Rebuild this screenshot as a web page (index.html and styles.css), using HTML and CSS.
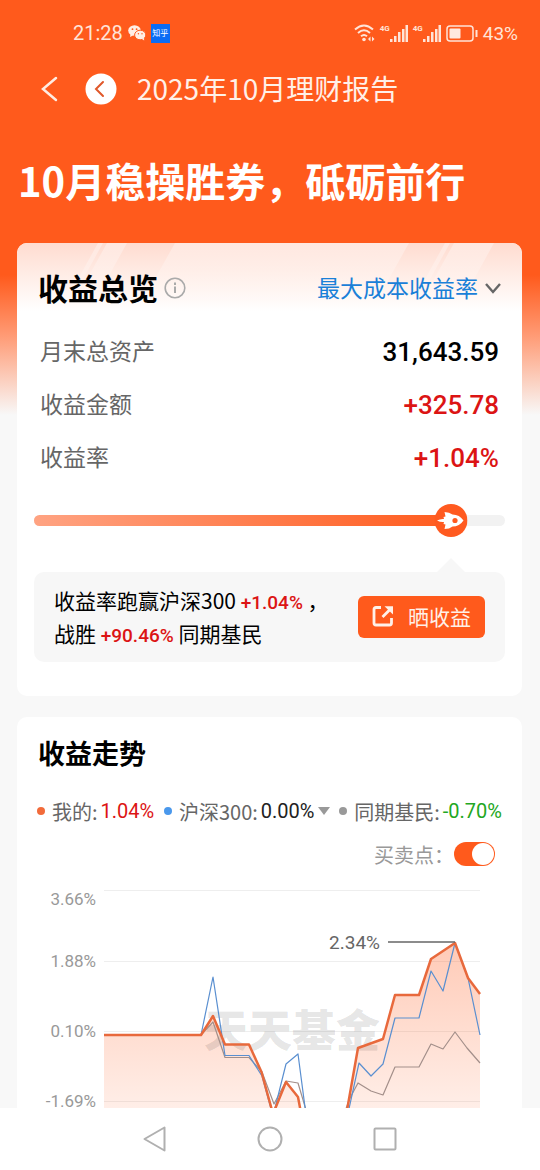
FILE: index.html
```html
<!DOCTYPE html>
<html lang="zh-CN">
<head>
    <meta charset="UTF-8"/>
    <meta name="viewport" content="width=device-width, initial-scale=1"/>
    <title>2025年10月理财报告</title>
    <link rel="stylesheet" href="styles.css">
</head>
<body>
<main class="page">
    <!-- Status bar -->
    <div class="status-bar">
        <div class="status-left">
            <span class="clock">21:28</span>
            <svg width="18" height="16" viewBox="0 0 18 16">
                <ellipse cx="6.5" cy="5.5" rx="6.3" ry="5.3" fill="#ffeee5"/>
                <path d="M2.5 9 2 12l3-1.6z" fill="#ffeee5"/>
                <ellipse cx="12.2" cy="10" rx="5.6" ry="4.8" fill="#ffeee5" stroke="#ff5a1c" stroke-width="1"/>
                <path d="m14 14 2.2 1.4-.3-2.6z" fill="#ffeee5"/>
                <g fill="#ff5a1c">
                    <circle cx="4.5" cy="4.2" r=".9"/><circle cx="8.6" cy="4.2" r=".9"/>
                    <circle cx="10.4" cy="8.8" r=".7"/><circle cx="14" cy="8.8" r=".7"/>
                </g>
            </svg>
            <span class="zhihu">知乎</span>
        </div>
        <div class="status-right">
            <svg width="21" height="18" viewBox="0 0 21 18" fill="none" stroke="#ffe4d8" stroke-width="2">
                <path d="M1 5.500q9-8 18 0M4 9q6-5.400 12 0M7 12.300q3-2.600 6 0"/>
                <circle cx="10" cy="15.500" r="1.800" fill="#ffe4d8" stroke="none"/>
                <path d="m16.500 12.500-2.500 2.500 2.500 2.500zM18 12.500l2.500 2.500-2.500 2.500z" fill="#ffe4d8" stroke="none"/>
            </svg>
            <span class="signal">
                <span class="net">4G</span>
                <svg width="18" height="17" viewBox="0 0 18 17" fill="#ffe4d8">
                    <path d="M0 14h2.500v3H0zM4 11h2.500v6H4zM8 7h2.500v10H8zM12 4h2.500v13H12zM15.500 0H18v17h-2.500z"/>
                </svg>
            </span>
            <span class="signal">
                <span class="net">4G</span>
                <svg width="18" height="17" viewBox="0 0 18 17" fill="#ffe4d8">
                    <path d="M0 14h2.500v3H0zM4 11h2.500v6H4zM8 7h2.500v10H8zM12 4h2.500v13H12zM15.500 0H18v17h-2.500z"/>
                </svg>
            </span>
            <svg width="32" height="17" viewBox="0 0 32 17">
                <rect x="1" y="1" width="26" height="15" rx="3" fill="none" stroke="#ffe4d8" stroke-width="1.500"/>
                <rect x="3.500" y="3.500" width="11" height="10" rx="1" fill="#ffe9df"/>
                <path d="M30.500 5v7" stroke="#ffe4d8" stroke-width="2"/>
            </svg>
            <span>43%</span>
        </div>
    </div>
    <!-- Title bar -->
    <header class="app-bar">
        <button class="icon-btn" type="button" aria-label="返回">
            <svg width="18" height="28" viewBox="0 0 18 28" fill="none" stroke="#ffece2" stroke-width="2.500" stroke-linecap="round">
                <path d="M15 3 2 14l13 11"/>
            </svg>
        </button>
        <button class="icon-btn" type="button" aria-label="关闭">
            <svg width="32" height="32" viewBox="0 0 32 32" fill="none">
                <circle cx="16" cy="16" r="15.500" fill="#fff"/>
                <path d="m18 9-7 7 7 7" stroke="#e0582a" stroke-width="2" stroke-linecap="round"/>
            </svg>
        </button>
        <span class="app-title">2025年10月理财报告</span>
    </header>
    <h1 class="headline">10月稳操胜券，砥砺前行</h1>

    <!-- Overview -->
    <section class="card overview">
        <svg class="card-bg" viewBox="0 0 505 68" preserveAspectRatio="none">
            <defs>
                <linearGradient id="peach" x1="0" y1="0" x2="0" y2="1">
                    <stop offset="0" stop-color="#ffdcd0"/>
                    <stop offset="1" stop-color="#ffffff"/>
                </linearGradient>
                <linearGradient id="fade" x1="0" y1="0" x2="0" y2="1">
                    <stop offset="0" stop-color="#ffffff" stop-opacity=".35"/>
                    <stop offset="1" stop-color="#ffffff" stop-opacity="0"/>
                </linearGradient>
            </defs>
            <path d="M0 0h505v68H0z" fill="url(#peach)"/>
            <path d="M81 0h5L54 58h-5zM90 0h20L78 58H58zM158 0h104l-38 68H120zM428 0h5l-32 58h-5zM437 0h40l-32 58h-40zM262 0h130l-38 68H224z" fill="url(#fade)"/>
        </svg>
        <div class="card-head">
            <h2 class="overview-title">收益总览</h2>
            <svg width="22" height="22" viewBox="0 0 22 22" fill="none" stroke="#aaa" stroke-width="2">
                <circle cx="11" cy="11" r="9.800" stroke-width="1.600"/>
                <path d="M11 9.500V16M11 5.500V8"/>
            </svg>
            <label class="picker">
                <select class="picker-select" aria-label="收益率口径">
                    <option>最大成本收益率</option>
                </select>
                <svg width="16" height="11" viewBox="0 0 16 11" fill="none" stroke="#666" stroke-width="2.400">
                    <path d="m1 1 7 8 7-8"/>
                </svg>
            </label>
        </div>
        <dl class="figures">
            <div class="figure">
                <dt>月末总资产</dt>
                <dd>31,643.59</dd>
            </div>
            <div class="figure">
                <dt>收益金额</dt>
                <dd class="up">+325.78</dd>
            </div>
            <div class="figure">
                <dt>收益率</dt>
                <dd class="up">+1.04%</dd>
            </div>
        </dl>
        <div class="rank">
            <progress class="rank-bar" value="90.46" max="100" aria-label="战胜同期基民"></progress>
            <svg class="rank-thumb" style="left: 88.5%" width="33" height="33" viewBox="0 0 33 33">
                <circle cx="16.500" cy="16.500" r="16.500" fill="#ff5a20"/>
                <path d="M2.500 16.500Q6 14.600 9.500 15L9 13l2-.5L10 8q5 0 8 2.500 7 0 11 6-4 6-11 6-3 2.500-8 2.500l1-4.500-2-.5.5-2Q6 18.400 2.500 16.500z" fill="#fff"/>
                <circle cx="20.500" cy="16.500" r="2.600" fill="#ff5a20"/>
            </svg>
        </div>
        <div class="tip">
            <p class="tip-text">
                收益率跑赢沪深300 <b>+1.04%</b> ，<br>
                战胜 <b>+90.46%</b> 同期基民
            </p>
            <button class="share-btn" type="button">
                <svg width="22" height="22" viewBox="0 0 22 22" fill="none" stroke="#fff0e8" stroke-width="2.800">
                    <path d="M9 2.500H4Q2 2.500 2 4.500V18q0 2 2 2h13.500q2 0 2-2v-5M10.500 12 18 4.500"/>
                    <path d="M12.500 1.200H21v8.300z" fill="#fff0e8" stroke="none"/>
                </svg>
                晒收益
            </button>
        </div>
    </section>

    <!-- Trend -->
    <section class="card trend">
        <h2 class="trend-title">收益走势</h2>
        <div class="legend">
            <span class="legend-item"><i class="dot dot-mine"></i>我的:<b class="up">1.04%</b></span>
            <button class="legend-item legend-btn" type="button">
                <i class="dot dot-index"></i>沪深300:<b>0.00%</b>
                <svg width="12" height="8" viewBox="0 0 12 8" fill="#999"><path d="M0 0h12L6 8z"/></svg>
            </button>
            <span class="legend-item"><i class="dot dot-peer"></i>同期基民:<b class="down">-0.70%</b></span>
        </div>
        <div class="switch-row">
            <label for="trades">买卖点：</label>
            <input class="switch" id="trades" type="checkbox" checked>
        </div>
        <svg class="chart" viewBox="17 874 505 286" role="img" aria-label="收益走势">
            <defs>
                <linearGradient id="area" gradientUnits="userSpaceOnUse" x1="0" y1="943" x2="0" y2="1140">
                    <stop offset="0" stop-color="#ff5a1c" stop-opacity=".32"/>
                    <stop offset="1" stop-color="#ff5a1c" stop-opacity=".06"/>
                </linearGradient>
            </defs>
            <path class="grid" d="M104 890.500H480M104 961.500H480M104 1031.500H480M104 1101.500H480"/>
            <g class="axis">
                <text x="96" y="905">3.66%</text>
                <text x="96" y="967">1.88%</text>
                <text x="96" y="1037">0.10%</text>
                <text x="96" y="1107">-1.69%</text>
            </g>
            <path fill="url(#area)" d="M104 1035H201L213 1016 225 1044.500H249L261.500 1072 273 1114 286 1082 298 1097 308 1150H340L358 1048 383 1039 395 995H419L431 959 455 943 468 978 480 994V1160H104z"/>
            <text class="watermark" x="204" y="1047">天天基金</text>
            <path class="line line-peer" d="M201 1035 213 1022 225 1057.500H249L262 1072 274 1104 286 1081 298 1083 312 1130H338L350 1098 358 1083 371 1091 383 1095 395 1067H419L431 1044 443 1049 455 1032 467 1048 480 1063"/>
            <path class="line line-index" d="M201 1035 213 977 225 1055.500H249L262 1076 273 1116 286 1064 298 1054 308 1130 340 1150 359 1063 371 1076 383 1064 395 1018H419L431 971 443 991 455 943 468 978 480 1035"/>
            <path class="line line-mine" d="M104 1035H201L213 1016 225 1044.500H249L261.500 1072 273 1114 286 1082 298 1097 308 1150H340L358 1048 383 1039 395 995H419L431 959 455 943 468 978 480 994"/>
            <path class="callout-line" d="M388 942H455"/>
            <text class="callout" x="380" y="949">2.34%</text>
        </svg>
    </section>
</main>

<!-- System navigation -->
<nav class="sys-nav">
    <button class="icon-btn" type="button" aria-label="后退">
        <svg width="26" height="26" viewBox="0 0 26 26"><path d="M22.500 1.500v23L2.500 13z"/></svg>
    </button>
    <button class="icon-btn" type="button" aria-label="主页">
        <svg width="26" height="26" viewBox="0 0 26 26"><circle cx="13" cy="13" r="11.500"/></svg>
    </button>
    <button class="icon-btn" type="button" aria-label="最近任务">
        <svg width="26" height="26" viewBox="0 0 26 26"><rect x="2.500" y="2.500" width="21" height="21" rx="1"/></svg>
    </button>
</nav>
</body>
</html>
```
FILE: styles.css
```css
* {
box-sizing: border-box;
}
body {
margin: 0;
height: 100vh;
display: flex;
flex-direction: column;
font-family: "Noto Sans CJK SC", sans-serif;
background-color: #f8f8f8;
color: #000;
}
h1, h2, p, dl, dd {
margin: 0;
}
svg {
display: block;
flex-shrink: 0;
}
button, select {
font: inherit;
color: inherit;
background: none;
border: 0;
padding: 0;
}
.page {
flex: 1;
min-height: 0;
overflow-y: auto;
scrollbar-width: none;
background: linear-gradient(#ff5a1c 275px, #ff9a74 335px, #f8f8f8 415px);
}
.up {
color: #dc1414;
}
.down {
color: #22a722;
}

/* Status bar */
.status-bar {
display: flex;
justify-content: space-between;
align-items: center;
height: 56px;
padding: 10px 22px 0 73px;
font-family: Roboto, "Noto Sans CJK SC", sans-serif;
font-size: 19px;
color: #ffe4d8;
}
.status-left, .status-right {
display: flex;
align-items: center;
gap: 5px;
}
.clock {
font-size: 20px;
}
.zhihu {
width: 19px;
line-height: 19px;
font-size: 8px;
text-align: center;
color: #fff;
background-color: #0a6cf5;
}
.signal {
display: flex;
}
.net {
font-size: 8px;
line-height: 8px;
font-weight: bold;
}

/* Title bar */
.app-bar {
display: flex;
align-items: center;
height: 66px;
padding-left: 41px;
gap: 26px;
}
.app-title {
padding-bottom: 3px;
font-size: 28px;
color: #fff0e8;
margin-left: -6px;
}
.headline {
padding: 28px 18px 33px;
font-size: 40px;
line-height: 60px;
color: #fff;
}

/* Cards */
.card {
position: relative;
margin: 0 18px 21px 17px;
padding: 0 17px;
background-color: #fff;
border-radius: 10px;
overflow: hidden;
}
.card-bg {
position: absolute;
top: 0;
left: 0;
width: 100%;
height: 68px;
}
.overview {
padding-top: 18px;
padding-bottom: 34px;
}
.card-head {
position: relative;
display: flex;
align-items: center;
gap: 6px;
height: 54px;
padding: 0 4px;
}
.overview-title {
padding-bottom: 3px;
font-size: 30px;
}
.picker {
display: flex;
align-items: center;
gap: 7px;
margin-left: auto;
}
.picker-select {
appearance: none;
padding-bottom: 3px;
font-size: 23px;
color: #1a80d8;
}
.figures {
padding: 10px 6px 0;
}
.figure {
display: flex;
justify-content: space-between;
align-items: center;
height: 53px;
}
.figure dt {
padding-bottom: 3px;
font-size: 23px;
color: #666;
}
.figure dd {
font-family: Roboto, sans-serif;
font-size: 26px;
font-weight: 500;
}

/* Rank progress */
.rank {
position: relative;
display: flex;
align-items: center;
height: 33px;
margin-top: 20px;
}
.rank-bar {
appearance: none;
width: 100%;
height: 11px;
border: 0;
border-radius: 6px;
overflow: hidden;
}
.rank-bar::-webkit-progress-bar {
background-color: #f2f2f2;
}
.rank-bar::-webkit-progress-value {
background: linear-gradient(90deg, #ffa382, #ff5a1c);
}
.rank-thumb {
position: absolute;
top: 0;
transform: translateX(-50%);
}

/* Tip under the progress */
.tip {
position: relative;
display: flex;
justify-content: space-between;
align-items: center;
margin-top: 35px;
padding: 12px 20px;
background-color: #f7f7f7;
border-radius: 10px;
}
.tip::before {
content: "";
position: absolute;
top: -14px;
left: 88.5%;
transform: translateX(-50%);
border: 14px solid transparent;
border-top: 0;
border-bottom-color: #f7f7f7;
}
.tip-text {
font-size: 21px;
line-height: 33px;
white-space: nowrap;
}
.tip-text b {
font-family: Roboto, sans-serif;
font-size: 19px;
line-height: 19px;
font-weight: 500;
color: #dc1414;
}
.share-btn {
display: flex;
align-items: center;
justify-content: center;
gap: 14px;
width: 127px;
height: 42px;
padding-bottom: 2px;
font-size: 21px;
color: #fff0e8;
background-color: #ff5a1c;
border-radius: 6px;
}

/* Trend */
.trend {
padding-top: 12px;
margin-bottom: 0;
}
.trend-title {
padding: 0 4px;
font-size: 27px;
line-height: 48px;
}
.legend {
display: flex;
justify-content: space-between;
align-items: center;
height: 26px;
margin-top: 21px;
padding: 0 3px;
font-size: 20px;
color: #666;
}
.legend-item {
display: flex;
align-items: center;
gap: 3px;
white-space: nowrap;
}
.legend-item b {
font-family: Roboto, sans-serif;
font-weight: 400;
}
.legend-btn b {
color: #222;
}
.dot {
width: 8px;
height: 8px;
margin-right: 4px;
border-radius: 50%;
}
.dot-mine {
background-color: #f26b3a;
}
.dot-index {
background-color: #4a98ec;
}
.dot-peer {
background-color: #999;
}
.switch-row {
display: flex;
justify-content: flex-end;
align-items: center;
height: 40px;
margin-top: 10px;
padding-right: 10px;
font-size: 20px;
color: #999;
}
.switch {
appearance: none;
display: flex;
width: 41px;
height: 24px;
margin: 0;
padding: 1px;
border-radius: 12px;
background-color: #ccc;
}
.switch::before {
content: "";
width: 22px;
height: 22px;
border-radius: 50%;
background-color: #fff;
}
.switch:checked {
justify-content: flex-end;
background-color: #ff5a1c;
}

/* Chart */
.chart {
width: calc(100% + 34px);
margin: 0 -17px;
font-family: Roboto, sans-serif;
}
.grid {
stroke: #eee;
}
.axis {
font-size: 17px;
fill: #999;
text-anchor: end;
}
.watermark {
font-family: "Noto Sans CJK SC", sans-serif;
font-size: 44px;
font-weight: 900;
fill: #000;
fill-opacity: .11;
}
.line {
fill: none;
stroke-linejoin: round;
}
.line-peer {
stroke: #a38f8a;
stroke-width: 1.2px;
}
.line-index {
stroke: #5a8fd0;
stroke-width: 1.2px;
}
.line-mine {
stroke: #e8693c;
stroke-width: 2.5px;
}
.callout-line {
stroke: #666;
stroke-width: 1.5px;
}
.callout {
font-size: 19px;
fill: #666;
text-anchor: end;
}

/* System navigation */
.sys-nav {
display: flex;
justify-content: center;
align-items: center;
gap: 89px;
height: 62px;
background-color: #fff;
}
.sys-nav svg {
fill: none;
stroke: #b0b0b0;
stroke-width: 2px;
stroke-linejoin: round;
}
```
